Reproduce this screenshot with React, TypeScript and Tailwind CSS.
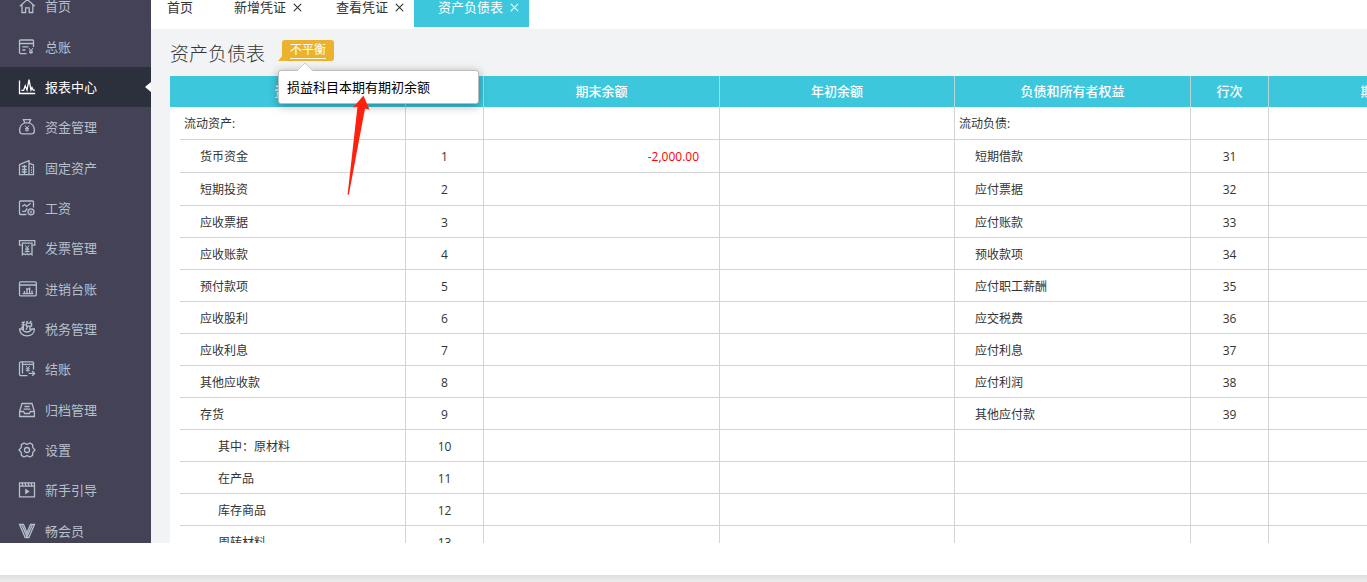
import React, { useState } from 'react';
import { X } from 'lucide-react';

interface MenuItem {
  label: string;
  icon: React.ReactNode;
}

interface Line {
  name: string;
  level: number;
  no?: number;
  end?: string;
}

const yen = (x: number, y: number) => (
  <path d={`M${x - 2} ${y - 3}l2 2.5l2-2.5M${x} ${y - 0.5}v3.5M${x - 2} ${y}h4M${x - 2} ${y + 1.6}h4`} strokeWidth="1" />
);

const MENU: MenuItem[] = [
  { label: '首页', icon: <path d="M1.8 9.2L9.3 2.6l7.5 6.6M4 8v7.5h3.6v-4.7h3.6v4.7h3.6V8" /> },
  {
    label: '总账',
    icon: <><path d="M15.5 9V3a1 1 0 0 0-1-1H2.500a1 1 0 0 0-1 1v11.600a1 1 0 0 0 1 1h6M1.500 5.500h14M4.400 8.800h6M4.400 12h3" />{yen(13, 13)}</>,
  },
  { label: '报表中心', icon: <path d="M1.500 2.500v13h15.700M3.400 12.400h2.200l1.600-4.600 1.800 4.200L11 1.600l2 10.400 1-2.400 1.200 2.600h1.800" /> },
  {
    label: '资金管理',
    icon: <><path d="M5.400 1.600h7.200l-1.400 3.200H6.800zM6.600 5C3.600 6 1.600 9.200 1.600 12.600c0 2 .8 3.200 2.400 3.200h10c1.600 0 2.400-1.200 2.400-3.200 0-3.400-2-6.600-5-7.600" />{yen(9, 10.6)}</>,
  },
  {
    label: '固定资产',
    icon: <path d="M5.500 3.800l5.500-2.200v14M5.500 3.800L1.500 5.600v10h14V6L11 4.200M3.800 7.500h5M3.800 10.500h5M3.800 13h5M13 8.500h1M13 11h1M13 13.400h1M6.500 6v9" />,
  },
  {
    label: '工资',
    icon: <><path d="M15.500 8.400V3a1 1 0 0 0-1-1h-12a1 1 0 0 0-1 1v11.500a1 1 0 0 0 1 1h6M4.200 7.600l2.400-2 2 1.800 4-3.200M4.200 12.400h3l2-3" /><circle cx="13" cy="12.800" r="3" /><path d="M11.800 11.400l1.200 1.400 1.200-1.400M13 12.800v1.800M11.800 13h2.400" strokeWidth="0.8" /></>,
  },
  {
    label: '发票管理',
    icon: <><path d="M3.400 6.200H1.500V1.700h15.300v4.500h-1.900M3.800 4.200h10.800M4.400 4.400v11.400l1.600-1 1.600 1 1.600-1 1.600 1 1.600-1 1.600 1V4.400" />{yen(9.2, 9.2)}<path d="M6.800 12.600h4.800" /></>,
  },
  { label: '进销台账', icon: <><rect x="1.500" y="1.800" width="16.800" height="14" rx="1" /><path d="M1.500 5h16.800M4.600 13.600h10.800M6.400 11v2.400M9 8.600v4.800M11.600 7.400v6M14 10.400v3M8 8.800h4.400" /></> },
  {
    label: '税务管理',
    icon: <path d="M1.600 9c0 4 3 6.800 7.400 6.800s7.400-2.800 7.400-6.800h-2.600c-1 2-2.400 3-4.800 3s-3.800-1-4.800-3zM3.600 2.600l3.400-.8M5.400 2.200v7.600M3.400 4.800h4M5.400 6L3.400 8M8.600 1l1 1.400M13.200.8L12 2.400M8.400 3.200h5.200v3H8.400zM9.800 6.400L8 9.600M12 6.400v3h2.600" />,
  },
  {
    label: '结账',
    icon: <><path d="M15.500 9.400V2.800a1 1 0 0 0-1-1H3a1.500 1.500 0 0 0-1.500 1.500v10.900A1.500 1.500 0 0 0 3 15.700h6.400M4.500 2v11.400M4.500 4.300h11M10.600 13.400H16M14.200 11l2.400 2.400-2.400 2.400" />{yen(9.8, 8.8)}</>,
  },
  { label: '归档管理', icon: <path d="M1.600 10.500L4 2.500h10l2.400 8v5H1.600zM1.600 10.500h4l1 2h4.800l1-2h4M6.400 5.500h5.200M5.600 8.200h6.800" /> },
  {
    label: '设置',
    icon: <><path d="M6 2l3 1.400L12 2l2.600 1.600.2 3L17 9l-2.200 2.400-.2 3L12 16l-3-1.400L6 16l-2.600-1.600-.2-3L1 9l2.200-2.400.2-3z" strokeLinejoin="round" /><circle cx="9" cy="9" r="2.500" /></>,
  },
  {
    label: '新手引导',
    icon: <><path d="M1.500 1.800h15v14h-15zM1.500 5.200h15M4 2l1 3M7 2l1 3M10 2l1 3M13 2l1 3" /><path d="M7.200 7.600v5.800l4.400-2.900z" fill="currentColor" stroke="none" /></>,
  },
  { label: '畅会员', icon: <path d="M1.500 2.300h4L9 11l3.500-8.700h4L10.800 15.500H7.200zM3.600 2.600L9 14.600l5.400-12" /> },
];

const TABS = ['首页', '新增凭证', '查看凭证', '资产负债表'];

const ASSETS: Line[] = [
  { name: '流动资产:', level: 0 },
  { name: '货币资金', level: 1, no: 1, end: '-2,000.00' },
  { name: '短期投资', level: 1, no: 2 },
  { name: '应收票据', level: 1, no: 3 },
  { name: '应收账款', level: 1, no: 4 },
  { name: '预付款项', level: 1, no: 5 },
  { name: '应收股利', level: 1, no: 6 },
  { name: '应收利息', level: 1, no: 7 },
  { name: '其他应收款', level: 1, no: 8 },
  { name: '存货', level: 1, no: 9 },
  { name: '其中：原材料', level: 2, no: 10 },
  { name: '在产品', level: 2, no: 11 },
  { name: '库存商品', level: 2, no: 12 },
  { name: '周转材料', level: 2, no: 13 },
];

const DEBTS: Line[] = [
  { name: '流动负债:', level: 0 },
  { name: '短期借款', level: 1, no: 31 },
  { name: '应付票据', level: 1, no: 32 },
  { name: '应付账款', level: 1, no: 33 },
  { name: '预收款项', level: 1, no: 34 },
  { name: '应付职工薪酬', level: 1, no: 35 },
  { name: '应交税费', level: 1, no: 36 },
  { name: '应付利息', level: 1, no: 37 },
  { name: '应付利润', level: 1, no: 38 },
  { name: '其他应付款', level: 1, no: 39 },
];

const INDENT = ['pl-1', 'pl-5', 'pl-[38px]'];

const Sidebar = () => {
  const [active, setActive] = useState('报表中心');
  return (
    <nav className="w-[151px] shrink-0 bg-[#434256] flex flex-col overflow-hidden">
      <ul className="flex-1 flex flex-col -mt-[14px] -mb-2">
        {MENU.map(m => (
          <li key={m.label} className="flex-1 min-h-10 flex">
            <button
              onClick={() => setActive(m.label)}
              className={`relative w-full flex items-center gap-2 pl-[18px] text-[13px] leading-5 ${active === m.label ? 'bg-[#2c2f3c] text-white' : 'text-[#b6c0cc]'}`}
            >
              <svg viewBox="0 0 19 18" className="w-[19px] h-[18px]" fill="none" stroke="currentColor" strokeWidth="1.3">{m.icon}</svg>
              <span>{m.label}</span>
              {active === m.label && (
                <svg viewBox="0 0 6 12" className="absolute right-0 top-1/2 -translate-y-1/2 w-[6px] h-3"><path d="M6 1v10L0 6z" fill="#fff" /></svg>
              )}
            </button>
          </li>
        ))}
      </ul>
    </nav>
  );
};

const TabBar = () => {
  const [active, setActive] = useState('资产负债表');
  return (
    <div className="h-[29px] shrink-0 bg-white flex items-end pb-[2px] overflow-hidden text-[13px] leading-5">
      {TABS.map((t, i) => (
        <div
          key={t}
          className={`h-[38px] pb-[2px] shrink-0 flex items-center gap-[7px] ${i === 0 ? 'pl-4 pr-[17px]' : 'pl-6 pr-[10px]'} ${active === t ? 'bg-[#3dc7dd] text-white' : 'text-[#333]'}`}
        >
          <button onClick={() => setActive(t)}>{t}</button>
          {i > 0 && <button aria-label={`关闭${t}`}><X className="w-[9px] h-[9px] scale-150" strokeWidth={2} /></button>}
        </div>
      ))}
    </div>
  );
};

const UnbalancedBadge = () => (
  <div className="relative">
    <button aria-describedby="reason" className="relative h-[21px] px-2 bg-[#ecb22e] rounded-[3px] text-white text-xs leading-4 flex items-center">
      <svg viewBox="0 0 6 6" className="absolute -left-1 bottom-0 w-[6px] h-[6px]"><path d="M5 0v6H0z" fill="#ecb22e" /></svg>
      <span className="border-b border-white/90">不平衡</span>
    </button>
    <div id="reason" role="tooltip" className="absolute z-10 top-[30px] -left-1 w-[201px] h-[34px] px-2 flex items-center bg-white border border-[#bbb] rounded-[3px] shadow-[0_2px_10px_rgba(0,0,0,0.35)] text-[13px] leading-5 text-black">
      <svg viewBox="0 0 16 9" className="absolute left-[18px] -top-[9px] w-4 h-[9px]"><path d="M0 9L8 1l8 8" fill="#fff" stroke="#ccc" /></svg>
      损益科目本期有期初余额
      <svg viewBox="0 0 26 102" className="absolute left-[66px] top-6 w-[26px] h-[102px]">
        <path d="M18.500 0.500L8 12.500l4.500-1L2.600 99.600l1.200.2L20 13.400l4.500 1.400z" fill="#ff2010" />
      </svg>
    </div>
  </div>
);

const BalanceTable = () => {
  const th = 'border-r border-[#b9d5da] font-medium pb-[2px]';
  const td = 'border-r border-b border-[#d4d4d4] pt-[2px]';
  return (
    <table className="table-fixed w-[1571px] bg-white border-separate border-spacing-0 text-xs text-[#333]">
      <colgroup>
        <col className="w-[10px]" />
        <col className="w-[226px]" />
        <col className="w-[78px]" />
        <col className="w-[236px]" />
        <col className="w-[235px]" />
        <col className="w-[236px]" />
        <col className="w-[78px]" />
        <col className="w-[236px]" />
        <col className="w-[236px]" />
      </colgroup>
      <thead className="bg-[#3dc7dd] text-white text-[13px] leading-5">
        <tr className="h-[31px]">
          <th colSpan={2} className={th}>资产</th>
          <th className={th}>行次</th>
          <th className={th}>期末余额</th>
          <th className={th}>年初余额</th>
          <th className={th}>负债和所有者权益</th>
          <th className={th}>行次</th>
          <th className={th}>期末余额</th>
          <th className={th}>年初余额</th>
        </tr>
      </thead>
      <tbody className="leading-4">
        {ASSETS.map((a, i) => {
          const d = DEBTS[i];
          return (
            <tr key={a.name} className={i < 3 ? 'h-[33px]' : 'h-8'}>
              <td></td>
              <td className={`${td} ${INDENT[a.level]}`}>{a.name}</td>
              <td className={`${td} text-center`}>{a.no}</td>
              <td className={`${td} text-right pr-5 text-[#f00]`}>{a.end}</td>
              <td className={td}></td>
              <td className={`${td} ${d ? INDENT[d.level] : ''}`}>{d?.name}</td>
              <td className={`${td} text-center`}>{d?.no}</td>
              <td className={td}></td>
              <td className={td}></td>
            </tr>
          );
        })}
      </tbody>
    </table>
  );
};

export default function App() {
  return (
    <div className="h-screen flex flex-col bg-white font-['Open_Sans','Noto_Sans_CJK_SC',sans-serif]">
      <div className="flex-1 min-h-0 flex overflow-hidden">
        <Sidebar />
        <main className="flex-1 min-w-0 flex flex-col bg-[#f2f3f5] overflow-hidden">
          <TabBar />
          <div className="flex items-start gap-[17px] pl-[19px] h-[47px] shrink-0 pt-[11px]">
            <h1 className="text-[19px] leading-7 font-light text-[#333]">资产负债表</h1>
            <UnbalancedBadge />
          </div>
          <div className="flex-1 min-h-0 pl-[19px] overflow-hidden">
            <BalanceTable />
          </div>
        </main>
      </div>
      <footer className="shrink-0 pt-8">
        <div className="h-[7px] bg-linear-to-b from-[#dcdfe1] to-[#ececec]"></div>
      </footer>
    </div>
  );
}
